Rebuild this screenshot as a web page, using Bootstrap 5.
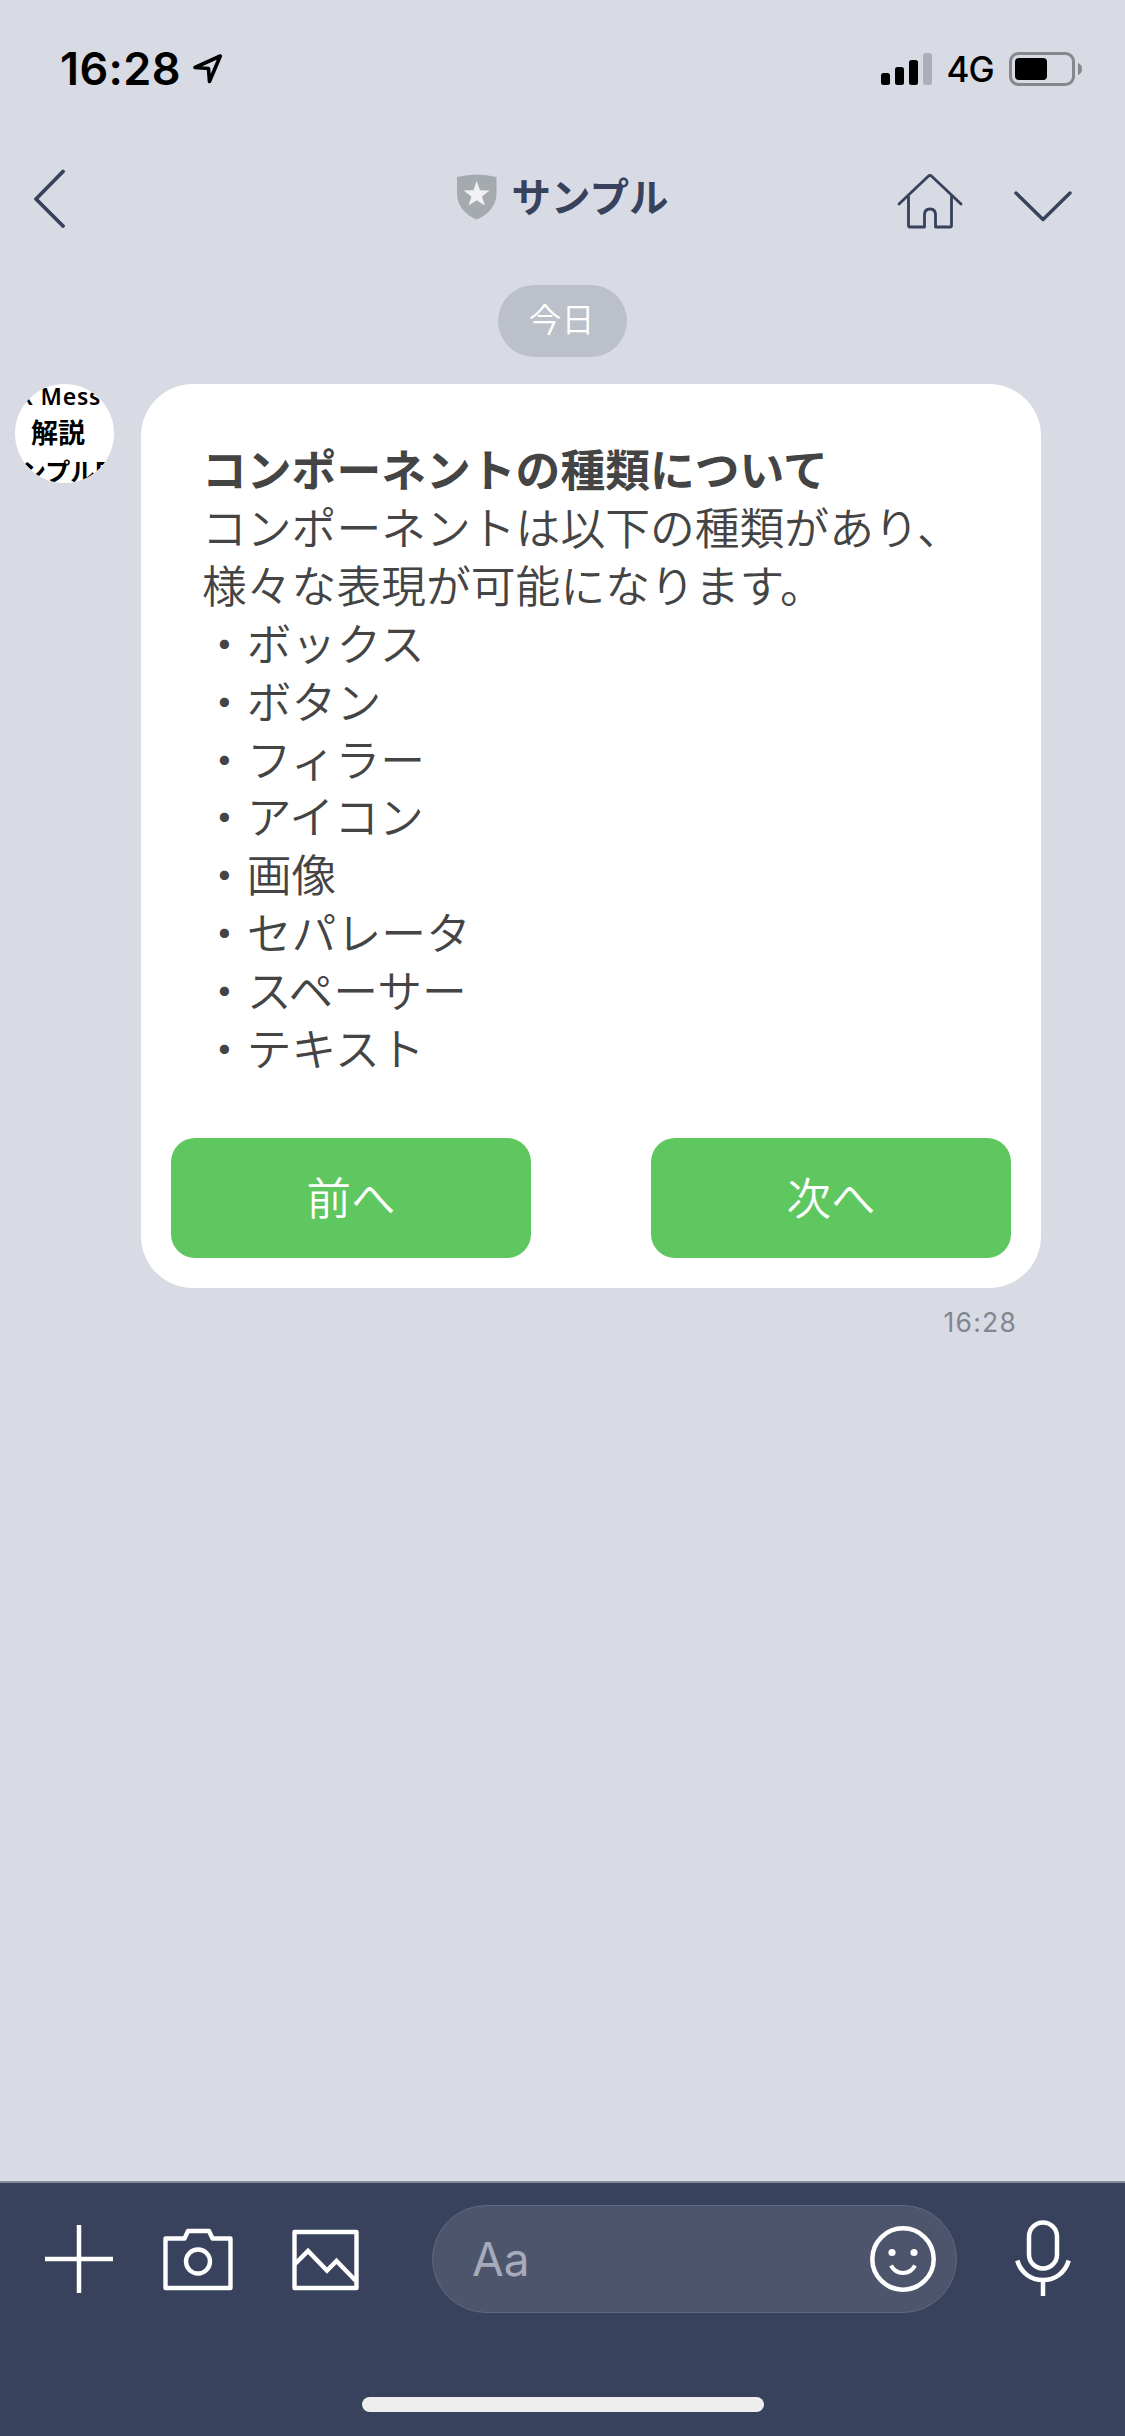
<!DOCTYPE html>
<html lang="ja">
<head>
<meta charset="utf-8">
<meta name="viewport" content="width=device-width, initial-scale=1">
<title>サンプル</title>
<link href="https://cdn.jsdelivr.net/npm/bootstrap@5.3.0/dist/css/bootstrap.min.css" rel="stylesheet">
<style>
  body { background: #d8dbe4; color: #444; font-family: Inter, "Noto Sans CJK JP", sans-serif; width: 1125px; height: 2436px; overflow: hidden; }
  svg { display: block; flex: none; fill: none; }
  .status-bar { height: 132px; padding: 6px 42px 0 60px; color: #000; }
  .clock { font-size: 45px; font-weight: 600; line-height: 60px; letter-spacing: .4px; }
  .network { font-size: 35px; font-weight: 500; line-height: 60px; letter-spacing: -.8px; margin: 0 15px 0 14px; }
  .chat-head { height: 132px; padding: 0 52px 0 33px; display: grid; grid-template-columns: 1fr auto 1fr; }
  .chat-title { font-size: 39.5px; font-weight: 700; color: #39425c; line-height: 60px; }
  .brand { padding-left: 19px; gap: 15px; }
  .brand svg { margin-top: -2px; }
  .head-tools { gap: 50px; padding-top: 5px; }
  .head-tools .chev { margin-top: 10px; }
  .day-pill { width: 129px; height: 72px; background: #bcc0c8; color: #fff; font-size: 33px; font-weight: 350; margin-top: 21px; padding-right: 2px; }
  .message-row { margin-top: 27px; padding-left: 15px; gap: 27px; }
  .avatar { width: 99px; height: 99px; background: #fff; color: #000; font-weight: 700; white-space: nowrap; }
  .avatar div { height: 38px; line-height: 38px; }
  .avatar .av-top { font-family: "Noto Sans", sans-serif; font-size: 23px; font-weight: 600; letter-spacing: .8px; padding-left: 5px; margin-top: -7px; }
  .avatar .av-mid { font-size: 27px; padding-left: 16px; }
  .avatar .av-low { font-size: 25px; padding-left: 6px; }
  .bubble { width: 900px; height: 904px; border-radius: 52px; background: #fff; padding: 59px 30px 30px; }
  .bubble-text { font-size: 44.8px; line-height: 57.9px; padding: 0 0 0 31px; font-weight: 350; color: #444; }
  .btn-flex { width: 360px; height: 120px; border-radius: 24px; font-size: 44.5px; font-weight: 350; color: #fff; background: #5ec75f; border: 0; padding: 2px 0 0; }
  .sent-at { width: 900px; font-size: 26.5px; color: #83868f; line-height: 36px; margin-top: 16px; padding-right: 24px; letter-spacing: 1.2px; }
  .composer { height: 255px; background: #39425c; border-top: 2px solid #858a99; padding: 22px 54px 0 45px; }
  .composer .photo-gap { margin-left: 59px; }
  .composer .cam-gap { margin-left: 50px; }
  .composer-input { width: 525px; height: 108px; background: #4d556d; border: 1px solid #5f6782; padding: 0 20px 0 39px; margin-left: 73px; color: #a6abbb; font-size: 46px; }
  .home-bar { width: 402px; height: 15px; background: #eee; margin-top: 84px; margin-left: 317px; }
</style>
</head>
<body class="d-flex flex-column">
  <header>
    <div class="status-bar d-flex align-items-center">
      <span class="clock">16:28</span>
      <svg class="ms-2" width="42" height="30" viewBox="-4 0 42 30" stroke="#000" stroke-width="3.6" stroke-linejoin="round"><path d="M2 13.500 27.300 2 16.500 27.500 15.500 14.500Z"/></svg>
      <svg class="ms-auto" width="51" height="33" viewBox="0 0 51 33"><rect y="20" width="9" height="12" rx="2.500" fill="#000"/><rect x="14" y="14" width="9" height="18" rx="2.500" fill="#000"/><rect x="28" y="7" width="9" height="25" rx="2.500" fill="#000"/><rect x="42" width="9" height="32" rx="2.500" fill="#acafb8"/></svg>
      <span class="network">4G</span>
      <svg width="74" height="34" viewBox="0 0 74 34"><rect x="1.500" y="1.500" width="63" height="31" rx="8" stroke="#86888e" stroke-width="3"/><rect x="6" y="6" width="32" height="22" rx="4" fill="#000"/><path d="M69 11q4 1.500 4 6t-4 6z" fill="#86888e"/></svg>
    </div>
    <div class="chat-head align-items-center">
      <svg width="32" height="60" viewBox="0 0 32 60" stroke="#39425c" stroke-width="3.800" stroke-linecap="round" stroke-linejoin="round"><path d="M30 3.500 3 31 30 58"/></svg>
      <div class="brand d-flex align-items-center">
        <svg width="40" height="46" viewBox="0 0 40 46"><path d="M0 3Q20-2 39.500 3V19C39.500 33 30 41 19.700 45.500 9 41 0 33 0 19Z" fill="#a5aaae"/><path d="M19.700 7 23 16.300 32.700 16.500 25 22.500 27.800 31.500 19.700 26.200 11.600 31.500 14.400 22.500 6.700 16.500 16.400 16.300Z" fill="#f1f1f4"/></svg>
        <span class="chat-title">サンプル</span>
      </div>
      <div class="head-tools d-flex align-items-center justify-content-end">
        <svg width="66" height="56" viewBox="0 0 66 56" stroke="#39425c" stroke-width="2.800" stroke-linecap="round" stroke-linejoin="round"><path d="M2 31 31 3.500Q33 1.500 35 3.500L64 31M11.500 22V52.500Q11.500 54 13 54H27.500V42Q27.500 36 33 36T38.500 42V54H53Q54.500 54 54.500 52.500V22"/></svg>
        <svg class="chev" width="60" height="32" viewBox="0 0 60 32" stroke="#39425c" stroke-width="3.400" stroke-linecap="round" stroke-linejoin="round"><path d="M3 3 30 29.500 57 3"/></svg>
      </div>
    </div>
  </header>

  <main class="flex-grow-1">
    <div class="day-pill rounded-pill mx-auto d-flex align-items-center justify-content-center">今日</div>
    <div class="message-row d-flex align-items-start">
      <div class="avatar rounded-circle overflow-hidden flex-shrink-0">
        <div class="av-top">x Mess</div>
        <div class="av-mid">解説</div>
        <div class="av-low">ンプルB</div>
      </div>
      <div>
        <article class="bubble d-flex flex-column justify-content-between">
          <div class="bubble-text">
            <div class="fw-bold">コンポーネントの種類について</div>
            <div>コンポーネントは以下の種類があり、<br>様々な表現が可能になります。</div>
            <div>・ボックス</div>
            <div>・ボタン</div>
            <div>・フィラー</div>
            <div>・アイコン</div>
            <div>・画像</div>
            <div>・セパレータ</div>
            <div>・スペーサー</div>
            <div>・テキスト</div>
          </div>
          <div class="d-flex justify-content-between">
            <button type="button" class="btn btn-flex">前へ</button>
            <button type="button" class="btn btn-flex">次へ</button>
          </div>
        </article>
        <div class="sent-at text-end">16:28</div>
      </div>
    </div>
  </main>

  <footer class="composer">
    <div class="d-flex align-items-center">
      <svg width="68" height="68" viewBox="0 0 68 68" stroke="#fff" stroke-width="4.500"><path d="M34 0V68M0 34H68"/></svg>
      <svg class="cam-gap" width="70" height="70" viewBox="0 0 70 70" stroke="#fff" stroke-width="4.400" stroke-linejoin="round"><path d="M2.500 14.500H21.500L25 7H46L49.500 14.500H67.500V64H2.500Z"/><circle cx="35" cy="37.500" r="12"/></svg>
      <svg class="photo-gap" width="67" height="68" viewBox="0 0 67 68" stroke="#fff" stroke-width="4.400" stroke-linejoin="round"><path d="M2.500 7H64.500V63H2.500Z"/><path d="M3 39 16 26 35 45.500 44.500 36 64 56" stroke-linejoin="miter"/></svg>
      <div class="composer-input rounded-pill d-flex align-items-center justify-content-between">
        <span>Aa</span>
        <svg width="66" height="66" viewBox="0 0 66 66" stroke="#fff" stroke-width="4.500"><circle cx="33" cy="33" r="30.700"/><circle cx="22" cy="26.500" r="3.600" fill="#fff" stroke="none"/><circle cx="44" cy="26.500" r="3.600" fill="#fff" stroke="none"/><path d="M21 39.500Q25 47 33 47T45 39.500" stroke-width="4"/></svg>
      </div>
      <svg class="ms-auto" width="56" height="80" viewBox="0 0 56 80" stroke="#fff" stroke-width="4.500"><rect x="14" y="3.500" width="28" height="46" rx="14"/><path d="M2.300 41.500C6 54 16 61 28 61S50 54 53.700 41.500M28 61V77"/></svg>
    </div>
    <div class="home-bar rounded-pill"></div>
  </footer>
<script src="https://cdn.jsdelivr.net/npm/bootstrap@5.3.0/dist/js/bootstrap.bundle.min.js"></script>
</body>
</html>
